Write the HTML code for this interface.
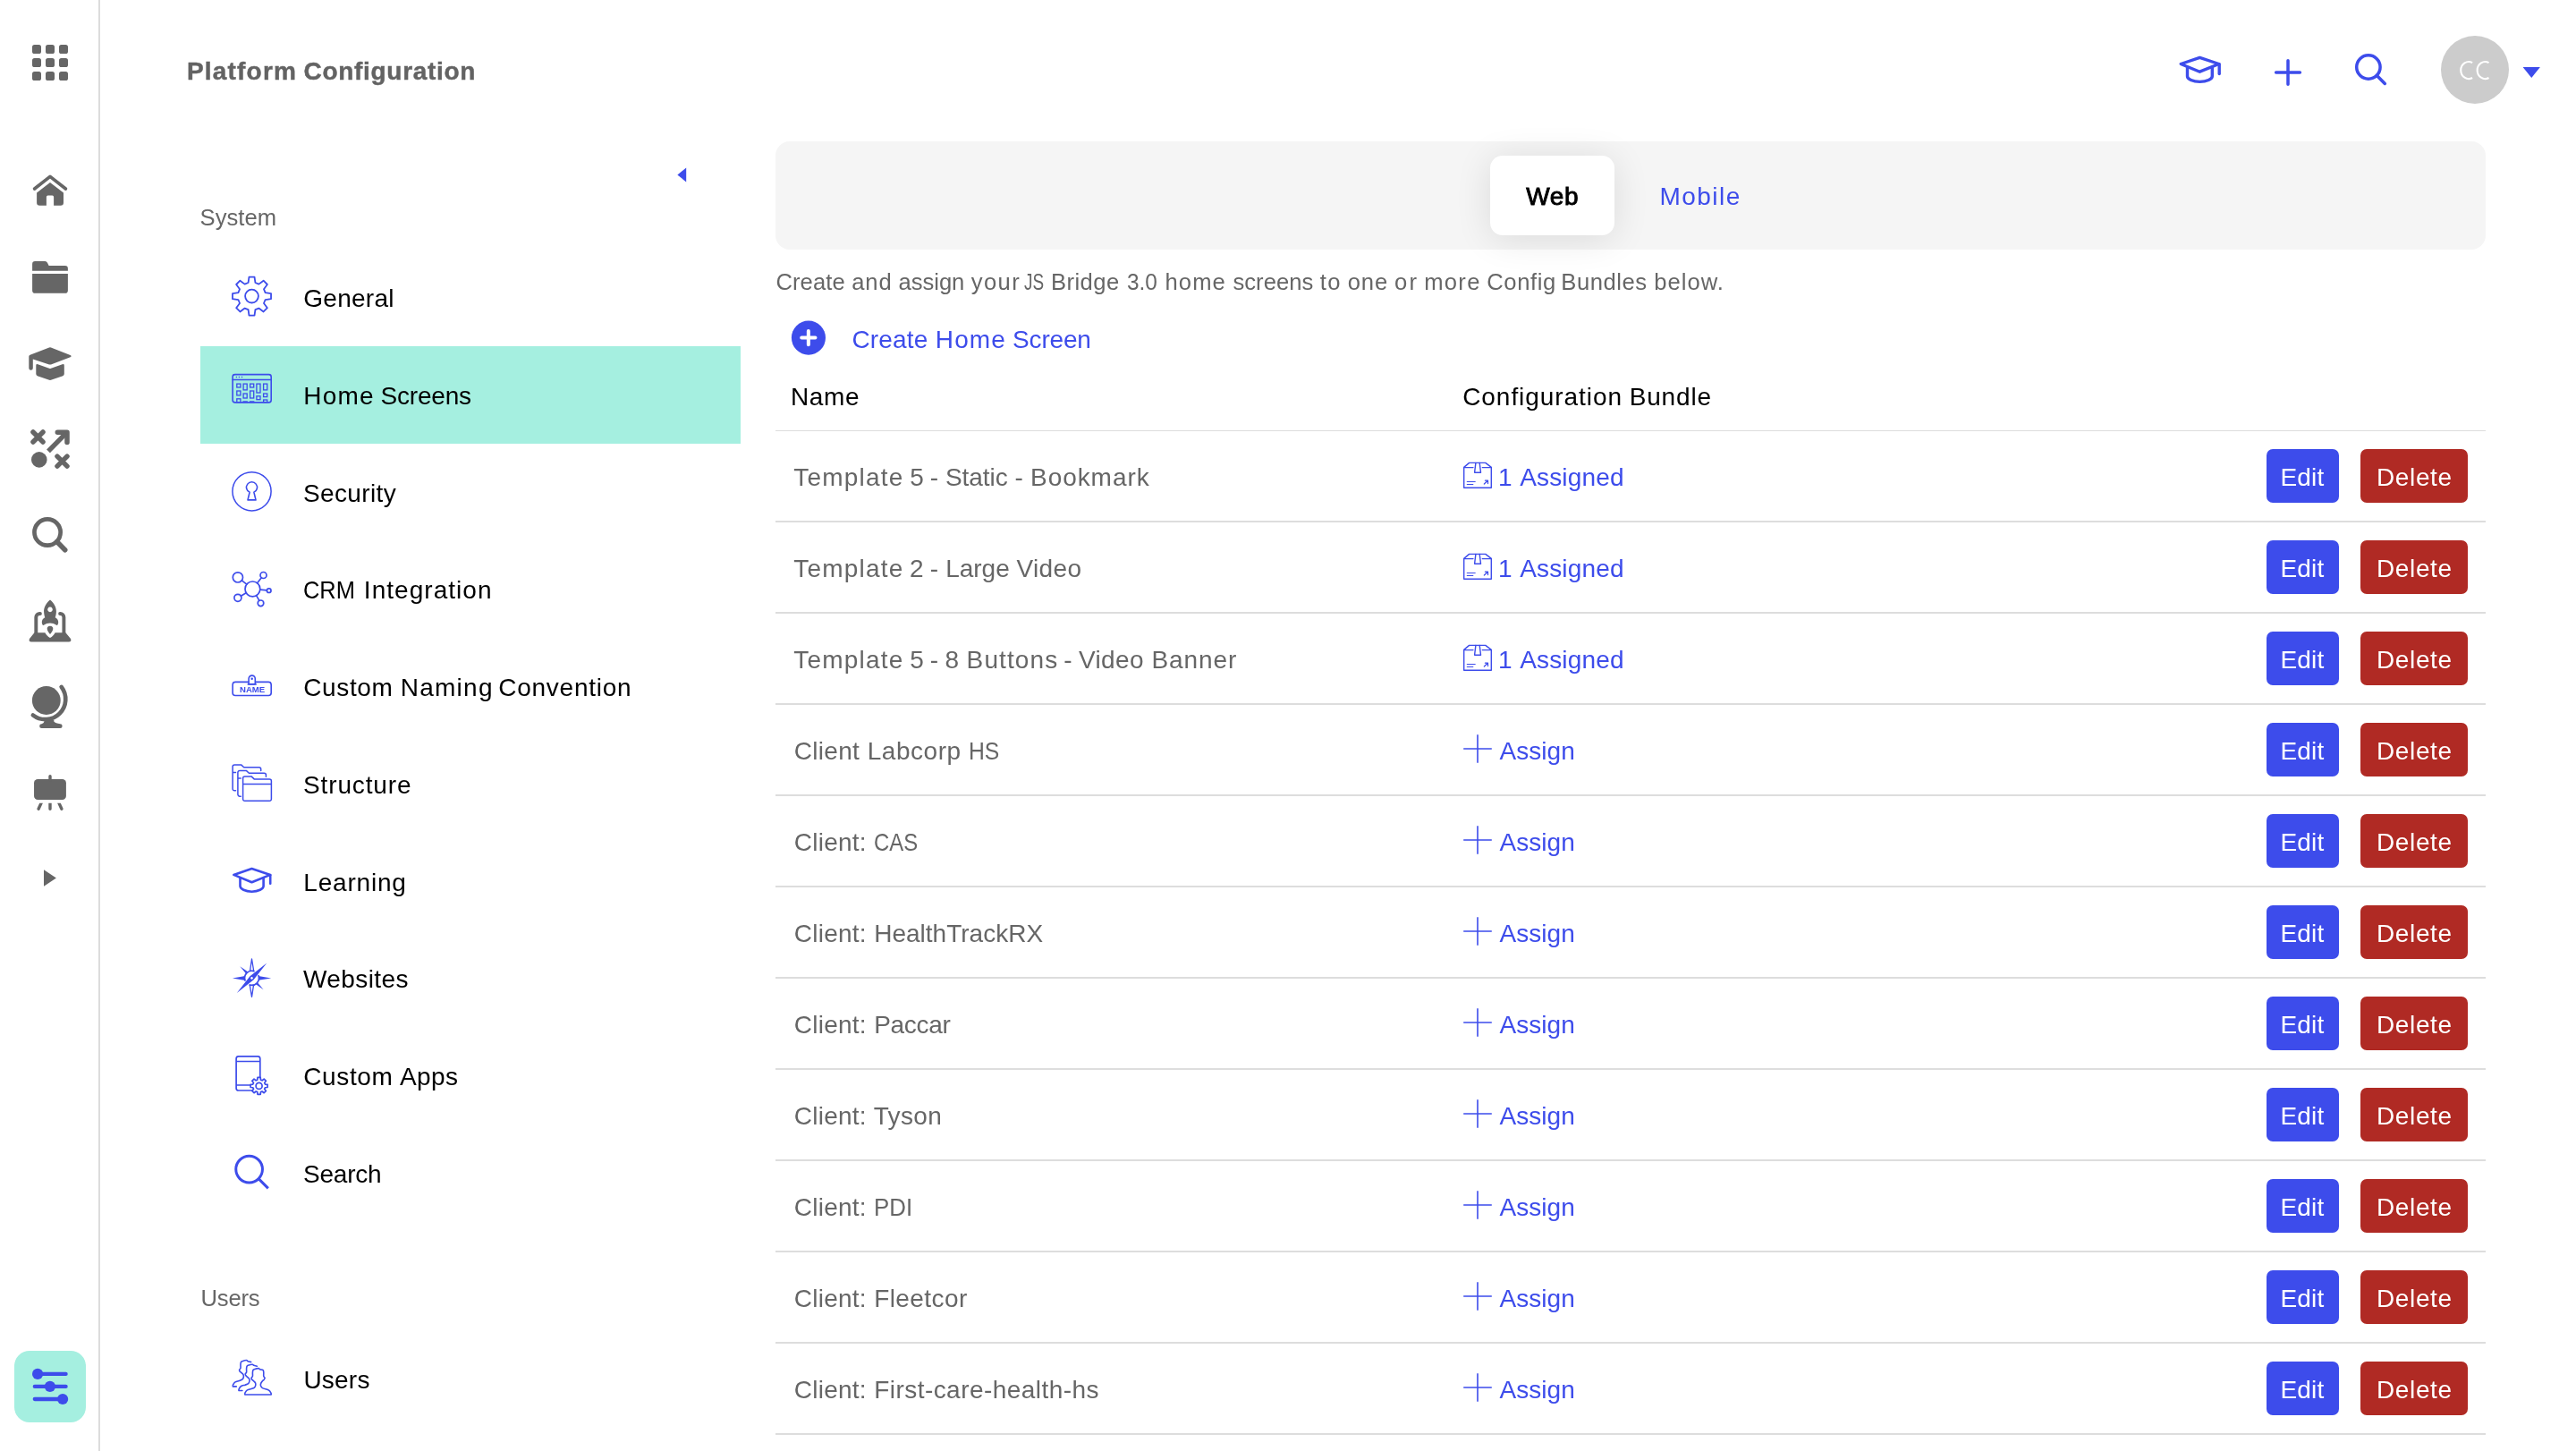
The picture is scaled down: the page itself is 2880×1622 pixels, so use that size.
<!DOCTYPE html>
<html><head><meta charset="utf-8"><title>Platform Configuration</title>
<style>
html,body{margin:0;padding:0;background:#fff}
body{width:2880px;height:1622px;position:relative;overflow:hidden;font-family:"Liberation Sans",sans-serif}
.t{position:absolute;white-space:nowrap;line-height:1;font-family:"Liberation Sans",sans-serif}
svg{position:absolute;left:0;top:0}
</style></head><body><div id="root" style="position:absolute;left:0;top:0;width:2880px;height:1622px;will-change:transform">
<div style="position:absolute;left:110px;top:0;width:2px;height:1622px;background:#dcdcdc"></div>
<div style="position:absolute;left:16px;top:1510px;width:80px;height:80px;border-radius:17px;background:#a5efe0"></div>
<div style="position:absolute;left:224px;top:387px;width:604px;height:109px;background:#a5efe0"></div>
<div style="position:absolute;left:867px;top:158px;width:1912px;height:121px;border-radius:16px;background:#f5f5f5"></div>
<div style="position:absolute;left:1666px;top:174px;width:139px;height:89px;border-radius:14px;background:#fff;box-shadow:0 4px 40px rgba(0,0,0,0.11)"></div>
<div style="position:absolute;left:2729px;top:40px;width:76px;height:76px;border-radius:50%;background:#cccccc"></div>
<div style="position:absolute;left:867px;top:481px;width:1912px;height:1px;background:#dddddd"></div>
<div style="position:absolute;left:867px;top:582px;width:1912px;height:2px;background:#dddddd"></div>
<div style="position:absolute;left:2534px;top:502px;width:81px;height:60px;border-radius:7px;background:#3d4ceb"></div>
<div style="position:absolute;left:2639px;top:502px;width:120px;height:60px;border-radius:7px;background:#b02a24"></div>
<div style="position:absolute;left:867px;top:684px;width:1912px;height:2px;background:#dddddd"></div>
<div style="position:absolute;left:2534px;top:604px;width:81px;height:60px;border-radius:7px;background:#3d4ceb"></div>
<div style="position:absolute;left:2639px;top:604px;width:120px;height:60px;border-radius:7px;background:#b02a24"></div>
<div style="position:absolute;left:867px;top:786px;width:1912px;height:2px;background:#dddddd"></div>
<div style="position:absolute;left:2534px;top:706px;width:81px;height:60px;border-radius:7px;background:#3d4ceb"></div>
<div style="position:absolute;left:2639px;top:706px;width:120px;height:60px;border-radius:7px;background:#b02a24"></div>
<div style="position:absolute;left:867px;top:888px;width:1912px;height:2px;background:#dddddd"></div>
<div style="position:absolute;left:2534px;top:808px;width:81px;height:60px;border-radius:7px;background:#3d4ceb"></div>
<div style="position:absolute;left:2639px;top:808px;width:120px;height:60px;border-radius:7px;background:#b02a24"></div>
<div style="position:absolute;left:867px;top:990px;width:1912px;height:2px;background:#dddddd"></div>
<div style="position:absolute;left:2534px;top:910px;width:81px;height:60px;border-radius:7px;background:#3d4ceb"></div>
<div style="position:absolute;left:2639px;top:910px;width:120px;height:60px;border-radius:7px;background:#b02a24"></div>
<div style="position:absolute;left:867px;top:1092px;width:1912px;height:2px;background:#dddddd"></div>
<div style="position:absolute;left:2534px;top:1012px;width:81px;height:60px;border-radius:7px;background:#3d4ceb"></div>
<div style="position:absolute;left:2639px;top:1012px;width:120px;height:60px;border-radius:7px;background:#b02a24"></div>
<div style="position:absolute;left:867px;top:1194px;width:1912px;height:2px;background:#dddddd"></div>
<div style="position:absolute;left:2534px;top:1114px;width:81px;height:60px;border-radius:7px;background:#3d4ceb"></div>
<div style="position:absolute;left:2639px;top:1114px;width:120px;height:60px;border-radius:7px;background:#b02a24"></div>
<div style="position:absolute;left:867px;top:1296px;width:1912px;height:2px;background:#dddddd"></div>
<div style="position:absolute;left:2534px;top:1216px;width:81px;height:60px;border-radius:7px;background:#3d4ceb"></div>
<div style="position:absolute;left:2639px;top:1216px;width:120px;height:60px;border-radius:7px;background:#b02a24"></div>
<div style="position:absolute;left:867px;top:1398px;width:1912px;height:2px;background:#dddddd"></div>
<div style="position:absolute;left:2534px;top:1318px;width:81px;height:60px;border-radius:7px;background:#3d4ceb"></div>
<div style="position:absolute;left:2639px;top:1318px;width:120px;height:60px;border-radius:7px;background:#b02a24"></div>
<div style="position:absolute;left:867px;top:1500px;width:1912px;height:2px;background:#dddddd"></div>
<div style="position:absolute;left:2534px;top:1420px;width:81px;height:60px;border-radius:7px;background:#3d4ceb"></div>
<div style="position:absolute;left:2639px;top:1420px;width:120px;height:60px;border-radius:7px;background:#b02a24"></div>
<div style="position:absolute;left:867px;top:1602px;width:1912px;height:2px;background:#dddddd"></div>
<div style="position:absolute;left:2534px;top:1522px;width:81px;height:60px;border-radius:7px;background:#3d4ceb"></div>
<div style="position:absolute;left:2639px;top:1522px;width:120px;height:60px;border-radius:7px;background:#b02a24"></div>
<svg width="2880" height="1622" viewBox="0 0 2880 1622"><g fill="#666666"><rect x="36" y="50" width="10" height="10" rx="2.6"/><rect x="51" y="50" width="10" height="10" rx="2.6"/><rect x="66" y="50" width="10" height="10" rx="2.6"/><rect x="36" y="65" width="10" height="10" rx="2.6"/><rect x="51" y="65" width="10" height="10" rx="2.6"/><rect x="66" y="65" width="10" height="10" rx="2.6"/><rect x="36" y="80" width="10" height="10" rx="2.6"/><rect x="51" y="80" width="10" height="10" rx="2.6"/><rect x="66" y="80" width="10" height="10" rx="2.6"/><path d="M38.6 211 L56 197.4 L73.4 211" fill="none" stroke="#666" stroke-width="3.7" stroke-linecap="round" stroke-linejoin="round"/><path d="M56 204.1 L71 215.6 V226.6 a3.2 3.2 0 0 1 -3.2 3.2 H60.1 V220.2 a1.6 1.6 0 0 0 -1.6 -1.6 h-5 a1.6 1.6 0 0 0 -1.6 1.6 V229.8 H44.3 a3.2 3.2 0 0 1 -3.2 -3.2 V215.6 Z"/><path d="M36.1 302.8 V295.2 a3.1 3.1 0 0 1 3.1 -3.1 H50.3 a3 3 0 0 1 2.7 1.7 L54.6 297.1 H72.8 a3.1 3.1 0 0 1 3.1 3.1 V302.8 Z"/><path d="M36.1 306.1 H75.9 V324.7 a3.1 3.1 0 0 1 -3.1 3.1 H39.2 a3.1 3.1 0 0 1 -3.1 -3.1 Z"/><path d="M55 388.4 Q56 388 57 388.4 L78.6 396.9 Q80.6 398.1 78.6 399.3 L57 407.4 Q56 407.8 55 407.4 L36.8 401.6 V411.4 a2.25 2.25 0 0 1 -4.5 0 V398.6 Q32.3 397.2 33.6 396.7 Z"/><path d="M40.3 408.6 Q40.3 406.6 42.3 407.3 L55 411.7 Q56 412.1 57 411.7 L69.7 407.3 Q71.8 406.6 71.8 408.6 V418 Q71.8 419.6 70.3 420.2 L57 424.8 Q56 425.1 55 424.8 L41.8 420.2 Q40.3 419.6 40.3 418 Z"/><path d="M37 483 L48 494 M48 483 L37 494 M64 510.1 L75 521.1 M75 510.1 L64 521.1" fill="none" stroke="#666" stroke-width="5.5" stroke-linecap="round" stroke-linejoin="round"/><circle cx="43.8" cy="513.9" r="8.8"/><path d="M64.3 483.2 H75 V494.4" fill="none" stroke="#666" stroke-width="5.5" stroke-linecap="round" stroke-linejoin="round"/><path d="M54 504.3 L74 484.2" fill="none" stroke="#666" stroke-width="5.4"/><circle cx="53.05" cy="595.05" r="14.6" fill="none" stroke="#666" stroke-width="4.7"/><path d="M63.6 605.6 L72.7 614.7" fill="none" stroke="#666" stroke-width="5.6" stroke-linecap="round"/><path d="M56 670.4 C61 674.5 63.2 679.5 62.9 684 C62.8 686.5 62.3 688.5 61.7 690.3 C64 691.3 65.4 693.3 65.2 696.2 L64.6 698.2 Q63.8 699.4 62.6 698.6 C61 697.2 58.6 696.4 56 696.4 C53.4 696.4 51 697.2 49.4 698.6 Q48.2 699.4 47.4 698.2 L46.8 696.2 C46.6 693.3 48 691.3 50.3 690.3 C49.7 688.5 49.2 686.5 49.1 684 C48.8 679.5 51 674.5 56 670.4 Z M56 678.6 a2.8 2.8 0 1 0 0.01 0 Z" fill-rule="evenodd"/><path d="M56 699.7 C58.3 699.7 59.5 701.3 59.3 703 C59.1 705 57.6 707.2 56 708.9 C54.4 707.2 52.9 705 52.7 703 C52.5 701.3 53.7 699.7 56 699.7 Z"/><path d="M44.9 686 H44.3 a4 4 0 0 0 -4 4 V707.4 M67.1 686 H67.4 a4 4 0 0 1 4 4 V707.4" fill="none" stroke="#666" stroke-width="3.9" stroke-linecap="round"/><path d="M38.4 707.2 H50.4 C51.6 709.6 53.6 711.8 56 713 C58.4 711.8 60.4 709.6 61.6 707.2 H73.4 L79 714 Q80.4 717.4 77 717.4 H35 Q31.6 717.4 33 714 Z"/><circle cx="51.8" cy="783" r="15.9"/><path d="M68.68 767.91 A22.6 22.6 0 0 1 36.9 799.5" fill="none" stroke="#666" stroke-width="4.7" stroke-linecap="round"/><path d="M49.4 804.6 H60.3 V806.6 Q62 808.6 67.3 809.3 a2.35 2.35 0 0 1 0 4.7 H46.5 a2.35 2.35 0 0 1 0 -4.7 Q49 808.6 49.4 806.8 Z"/><rect x="38.05" y="871.1" width="35.85" height="23" rx="4.2"/><path d="M56 867.8 V872" fill="none" stroke="#666" stroke-width="3.4" stroke-linecap="round"/><path d="M54.3 897.8 H57.7 V904.2 a1.7 1.7 0 0 1 -3.4 0 Z"/><path d="M44.2 897.8 H47.9 L44.6 904.9 a1.7 1.7 0 0 1 -3.1 -1.4 Z M67.8 897.8 H64.1 L67.4 904.9 a1.7 1.7 0 0 0 3.1 -1.4 Z"/><path d="M49 972.3 V990.8 L62.9 981.5 Z"/></g><path d="M42 1535.9 H73.6 M38.8 1549.9 H73.6 M38.8 1564 H70" fill="none" stroke="#3d4ceb" stroke-width="4.3" stroke-linecap="round"/><g fill="#3d4ceb"><circle cx="42.1" cy="1535.9" r="6.1"/><circle cx="55.9" cy="1549.9" r="6.1"/><circle cx="70.1" cy="1564" r="6.1"/></g><path d="M2438.2 71.5 L2459.35 64.4 L2480.8 71.5 L2459.35 80.2 Z" fill="none" stroke="#3d4ceb" stroke-width="3.4" stroke-linecap="round" stroke-linejoin="round"/><path d="M2481.2 71.8 V82.6" fill="none" stroke="#3d4ceb" stroke-width="3.4" stroke-linecap="round" stroke-linejoin="round"/><path d="M2445.5 75.6 V85.2 C2445.5 88.3 2451.5 91.4 2459.35 91.4 S2473.3 88.3 2473.3 85.2 V75.6" fill="none" stroke="#3d4ceb" stroke-width="3.4" stroke-linecap="round" stroke-linejoin="round"/><path d="M2544.6 81 H2571.4 M2558 67.7 V94.3" fill="none" stroke="#3d4ceb" stroke-width="3.5" stroke-linecap="round"/><circle cx="2647.9" cy="75" r="13.2" fill="none" stroke="#3d4ceb" stroke-width="3.5"/><path d="M2657.4 84.5 L2666.3 93.4" fill="none" stroke="#3d4ceb" stroke-width="3.6" stroke-linecap="round"/><path d="M2820.6 75 H2839.9 L2830.25 86.9 Z" fill="#3d4ceb"/><path d="M2764.13 70.2 A8.8 9.5 0 1 0 2764.13 87" fill="none" stroke="#fff" stroke-width="2.1"/><path d="M2782.53 70.2 A8.8 9.5 0 1 0 2782.53 87" fill="none" stroke="#fff" stroke-width="2.1"/><path d="M767.2 187.5 V203.4 L757.4 195.45 Z" fill="#3d4ceb"/><path d="M277.57 316.00 L278.47 309.56 L284.53 309.56 L285.43 316.00 L289.39 317.64 L294.59 313.73 L298.87 318.01 L294.96 323.21 L296.60 327.17 L303.04 328.07 L303.04 334.13 L296.60 335.03 L294.96 338.99 L298.87 344.19 L294.59 348.47 L289.39 344.56 L285.43 346.20 L284.53 352.64 L278.47 352.64 L277.57 346.20 L273.61 344.56 L268.41 348.47 L264.13 344.19 L268.04 338.99 L266.40 335.03 L259.96 334.13 L259.96 328.07 L266.40 327.17 L268.04 323.21 L264.13 318.01 L268.41 313.73 L273.61 317.64Z" fill="none" stroke="#3d4ceb" stroke-width="1.8" stroke-linejoin="round" stroke-linecap="round"/><circle cx="281.5" cy="331.1" r="7.4" fill="none" stroke="#3d4ceb" stroke-width="1.8" stroke-linejoin="round" stroke-linecap="round"/><rect x="260.1" y="418.6" width="43.1" height="31.3" rx="2.6" fill="none" stroke="#3d4ceb" stroke-width="1.6" stroke-linejoin="round" stroke-linecap="round"/><path d="M260.1 424.5 H303.2" fill="none" stroke="#3d4ceb" stroke-width="1.6" stroke-linejoin="round" stroke-linecap="round"/><circle cx="264.4" cy="421.4" r="0.75" fill="#3d4ceb"/><circle cx="267.4" cy="421.4" r="0.75" fill="#3d4ceb"/><circle cx="270.5" cy="421.4" r="0.75" fill="#3d4ceb"/><rect x="264.8" y="429.1" width="4.1" height="3.9" fill="none" stroke="#3d4ceb" stroke-width="1.3"/><rect x="264.8" y="437.0" width="4.1" height="4.9" fill="none" stroke="#3d4ceb" stroke-width="1.3"/><rect x="264.8" y="445.8" width="4.1" height="3.8" fill="none" stroke="#3d4ceb" stroke-width="1.3"/><rect x="272.1" y="429.1" width="4.1" height="6.8" fill="none" stroke="#3d4ceb" stroke-width="1.3"/><rect x="272.1" y="440.0" width="4.1" height="5.0" fill="none" stroke="#3d4ceb" stroke-width="1.3"/><rect x="272.1" y="448.9" width="4.1" height="0.7" fill="none" stroke="#3d4ceb" stroke-width="1.3"/><rect x="279.6" y="429.1" width="4.1" height="3.9" fill="none" stroke="#3d4ceb" stroke-width="1.3"/><rect x="279.6" y="437.0" width="4.1" height="8.0" fill="none" stroke="#3d4ceb" stroke-width="1.3"/><rect x="279.6" y="448.9" width="4.1" height="0.7" fill="none" stroke="#3d4ceb" stroke-width="1.3"/><rect x="286.9" y="429.1" width="4.1" height="9.9" fill="none" stroke="#3d4ceb" stroke-width="1.3"/><rect x="286.9" y="442.8" width="4.1" height="3.9" fill="none" stroke="#3d4ceb" stroke-width="1.3"/><rect x="294.6" y="429.1" width="4.1" height="6.8" fill="none" stroke="#3d4ceb" stroke-width="1.3"/><rect x="294.6" y="440.0" width="4.1" height="3.6" fill="none" stroke="#3d4ceb" stroke-width="1.3"/><rect x="294.6" y="447.0" width="4.1" height="2.6" fill="none" stroke="#3d4ceb" stroke-width="1.3"/><circle cx="281.5" cy="549.3" r="21.6" fill="none" stroke="#3d4ceb" stroke-width="1.5" stroke-linejoin="round" stroke-linecap="round"/><path d="M279.1 550.3 A6 6 0 1 1 283.9 550.3 L286.0 558.9 H277.0 Z" fill="none" stroke="#3d4ceb" stroke-width="1.6" stroke-linejoin="round" stroke-linecap="round"/><circle cx="282.4" cy="658.4" r="8.4" fill="none" stroke="#3d4ceb" stroke-width="1.7" stroke-linejoin="round" stroke-linecap="round"/><circle cx="265.9" cy="645.4" r="5.6" fill="none" stroke="#3d4ceb" stroke-width="1.7" stroke-linejoin="round" stroke-linecap="round"/><path d="M275.80 653.20 L270.30 648.87" fill="none" stroke="#3d4ceb" stroke-width="1.7" stroke-linejoin="round" stroke-linecap="round"/><circle cx="294.5" cy="643.0" r="3.5" fill="none" stroke="#3d4ceb" stroke-width="1.7" stroke-linejoin="round" stroke-linecap="round"/><path d="M287.59 651.79 L292.34 645.75" fill="none" stroke="#3d4ceb" stroke-width="1.7" stroke-linejoin="round" stroke-linecap="round"/><circle cx="300.7" cy="660.2" r="2.3" fill="none" stroke="#3d4ceb" stroke-width="1.7" stroke-linejoin="round" stroke-linecap="round"/><path d="M290.76 659.22 L298.41 659.97" fill="none" stroke="#3d4ceb" stroke-width="1.7" stroke-linejoin="round" stroke-linecap="round"/><circle cx="291.5" cy="674.3" r="3.3" fill="none" stroke="#3d4ceb" stroke-width="1.7" stroke-linejoin="round" stroke-linecap="round"/><path d="M286.57 665.69 L289.86 671.44" fill="none" stroke="#3d4ceb" stroke-width="1.7" stroke-linejoin="round" stroke-linecap="round"/><circle cx="265.9" cy="668.3" r="4.0" fill="none" stroke="#3d4ceb" stroke-width="1.7" stroke-linejoin="round" stroke-linecap="round"/><path d="M275.20 662.72 L269.33 666.24" fill="none" stroke="#3d4ceb" stroke-width="1.7" stroke-linejoin="round" stroke-linecap="round"/><rect x="260.1" y="762.4" width="43.1" height="15.1" rx="3" fill="none" stroke="#3d4ceb" stroke-width="1.6" stroke-linejoin="round" stroke-linecap="round"/><path d="M278.1 764.7 V758.7 a3.6 3.6 0 0 1 7.2 0 V764.7 Z" fill="#fff" stroke="#3d4ceb" stroke-width="1.6" stroke-linejoin="round"/><path d="M277.5 764.9 H285.9" fill="none" stroke="#3d4ceb" stroke-width="1.9" stroke-linejoin="round" stroke-linecap="round"/><circle cx="281.7" cy="758.7" r="1.25" fill="#3d4ceb"/><text x="282.1" y="774" text-anchor="middle" font-family="Liberation Sans, sans-serif" font-weight="700" font-size="9.6" textLength="28.2" lengthAdjust="spacingAndGlyphs" fill="#3d4ceb">NAME</text><path d="M271.6 870 a2.1 2.1 0 0 1 2.1 -2.1 H281 L284.2 870.9 H301.3 a2.1 2.1 0 0 1 2.1 2.1 V893.2 a2.1 2.1 0 0 1 -2.1 2.1 H273.7 a2.1 2.1 0 0 1 -2.1 -2.1 Z M271.6 876.5 H303.4" fill="none" stroke="#3d4ceb" stroke-width="1.5" stroke-linejoin="round" stroke-linecap="round"/><path d="M297.4 868.2 V866.3 a2.1 2.1 0 0 0 -2.1 -2.1 H278.4 L275.3 861.4 H268 a2.1 2.1 0 0 0 -2.1 2.1 V888.1 a2.1 2.1 0 0 0 2.1 2.1 H269.2 M265.9 870 H269.2" fill="none" stroke="#3d4ceb" stroke-width="1.5" stroke-linejoin="round" stroke-linecap="round"/><path d="M291.7 861.6 V859.9 a2.1 2.1 0 0 0 -2.1 -2.1 H272.7 L269.6 854.9 H262.2 a2.1 2.1 0 0 0 -2.1 2.1 V881.7 a2.1 2.1 0 0 0 2.1 2.1 H263.5 M260.1 863.5 H263.5" fill="none" stroke="#3d4ceb" stroke-width="1.5" stroke-linejoin="round" stroke-linecap="round"/><path d="M261.3 977.9 L281.5 971.1 L302.2 977.9 L281.5 986.3 Z" fill="none" stroke="#3d4ceb" stroke-width="2.6" stroke-linejoin="round" stroke-linecap="round"/><path d="M302.2 978.2 V987.8" fill="none" stroke="#3d4ceb" stroke-width="2.6" stroke-linejoin="round" stroke-linecap="round"/><path d="M268.5 982 V990.4 C268.5 993.6 274.3 996.7 281.5 996.7 S294.6 993.6 294.6 990.4 V982" fill="none" stroke="#3d4ceb" stroke-width="2.6" stroke-linejoin="round" stroke-linecap="round"/><path d="M298.3 1076.4 L283.55 1095.35 L264.8 1110 L279.45 1091.25 Z M281.5 1091.95 a1.35 1.35 0 1 0 0.01 0 Z" fill="#3d4ceb" fill-rule="evenodd"/><path d="M259.9 1093.4 L274.2 1091.1 L274.2 1096 Z M303.2 1093.4 L288.8 1090.9 L288.8 1095.8 Z" fill="#3d4ceb"/><path d="M268.3 1080.2 L277.0 1086.3 L274.9 1088.2 Z M294.6 1106.2 L286.0 1100.3 L288.1 1098.4 Z" fill="#3d4ceb"/><path d="M279.5 1085.3 L281.5 1072 L283.7 1085.3 Z M279.3 1101.3 L281.5 1114.4 L283.5 1101.3 Z" fill="none" stroke="#3d4ceb" stroke-width="1.3" stroke-linejoin="round" stroke-linecap="round"/><path d="M273.98 1096.04 A8 8 0 0 1 283.84 1085.65 M289.02 1090.56 A8 8 0 0 1 279.16 1100.95" fill="none" stroke="#3d4ceb" stroke-width="1.7" stroke-linejoin="round" stroke-linecap="round"/><path d="M290.8 1204.2 V1183.4 a2.6 2.6 0 0 0 -2.6 -2.6 H266.7 a2.6 2.6 0 0 0 -2.6 2.6 V1216.4 a2.6 2.6 0 0 0 2.6 2.6 H281.6 M264.1 1186.5 H290.8 M264.1 1213 H279.6" fill="none" stroke="#3d4ceb" stroke-width="1.7" stroke-linejoin="round" stroke-linecap="round"/><path d="M287.73 1207.15 L288.02 1204.43 L291.18 1204.43 L291.47 1207.15 L293.05 1207.81 L295.17 1206.08 L297.42 1208.33 L295.69 1210.45 L296.35 1212.03 L299.07 1212.32 L299.07 1215.48 L296.35 1215.77 L295.69 1217.35 L297.42 1219.47 L295.17 1221.72 L293.05 1219.99 L291.47 1220.65 L291.18 1223.37 L288.02 1223.37 L287.73 1220.65 L286.15 1219.99 L284.03 1221.72 L281.78 1219.47 L283.51 1217.35 L282.85 1215.77 L280.13 1215.48 L280.13 1212.32 L282.85 1212.03 L283.51 1210.45 L281.78 1208.33 L284.03 1206.08 L286.15 1207.81Z" fill="#fff" stroke="#3d4ceb" stroke-width="1.7" stroke-linejoin="round"/><circle cx="289.6" cy="1213.9" r="3.5" fill="none" stroke="#3d4ceb" stroke-width="1.7" stroke-linejoin="round" stroke-linecap="round"/><circle cx="278.6" cy="1307.1" r="14.85" fill="none" stroke="#3d4ceb" stroke-width="3.0" stroke-linejoin="round" stroke-linecap="round"/><path d="M289.3 1317.9 L299.8 1328.4" fill="none" stroke="#3d4ceb" stroke-width="3.0"/><path d="M273.82 1558.95 C273.86 1558.62 273.60 1557.81 274.04 1556.96 C274.48 1556.12 275.33 1554.61 276.47 1553.88 C277.61 1553.14 279.55 1553.03 280.88 1552.55 C282.20 1552.07 283.60 1551.67 284.41 1551.01 C285.22 1550.35 285.55 1549.43 285.73 1548.58 C285.91 1547.74 285.88 1546.74 285.51 1545.94 C285.14 1545.13 284.19 1544.39 283.52 1543.73 C282.86 1543.07 281.94 1542.55 281.54 1541.97 C281.14 1541.38 280.95 1540.79 281.10 1540.20 C281.25 1539.61 282.20 1539.39 282.42 1538.44 C282.64 1537.48 282.35 1535.57 282.42 1534.47 C282.50 1533.36 282.57 1532.44 282.86 1531.82 C283.16 1531.20 283.16 1531.08 284.19 1530.72 C285.22 1530.35 287.97 1529.61 289.04 1529.61 C290.10 1529.61 289.74 1530.39 290.58 1530.72 C291.43 1531.05 293.41 1530.97 294.11 1531.60 C294.81 1532.22 294.66 1533.33 294.77 1534.47 C294.88 1535.61 294.55 1537.44 294.77 1538.44 C294.99 1539.43 296.06 1539.76 296.10 1540.42 C296.13 1541.08 295.43 1541.86 294.99 1542.41 C294.55 1542.96 294.00 1543.07 293.45 1543.73 C292.90 1544.39 292.02 1545.49 291.69 1546.38 C291.35 1547.26 291.17 1548.14 291.46 1549.02 C291.76 1549.91 292.05 1550.90 293.45 1551.67 C294.85 1552.44 298.41 1552.99 299.85 1553.66 C301.28 1554.32 301.50 1554.94 302.05 1555.64 C302.60 1556.34 302.97 1557.29 303.15 1557.85 C303.34 1558.40 303.15 1558.76 303.15 1558.95 Z" fill="none" stroke="#3d4ceb" stroke-width="1.6" stroke-linejoin="round" stroke-linecap="round"/><path d="M287.27 1527.19 C286.69 1527.04 284.59 1526.64 283.75 1526.31 C282.90 1525.98 283.27 1525.20 282.20 1525.20 C281.14 1525.20 278.38 1525.94 277.35 1526.31 C276.32 1526.67 276.32 1526.78 276.03 1527.41 C275.73 1528.03 275.66 1528.95 275.58 1530.06 C275.51 1531.16 275.81 1533.07 275.58 1534.03 C275.36 1534.98 274.41 1535.20 274.26 1535.79 C274.11 1536.38 274.30 1536.97 274.70 1537.55 C275.11 1538.14 276.03 1538.66 276.69 1539.32 C277.35 1539.98 278.30 1540.72 278.67 1541.52 C279.04 1542.33 279.08 1543.33 278.89 1544.17 C278.71 1545.02 278.38 1545.94 277.57 1546.60 C276.76 1547.26 275.36 1547.66 274.04 1548.14 C272.72 1548.62 270.77 1548.73 269.63 1549.46 C268.49 1550.20 267.64 1551.71 267.20 1552.55 C266.76 1553.40 267.02 1554.21 266.98 1554.54 H270.88" fill="none" stroke="#3d4ceb" stroke-width="1.6" stroke-linejoin="round" stroke-linecap="round"/><path d="M280.66 1522.56 C280.07 1522.41 277.97 1522.01 277.13 1521.67 C276.28 1521.34 276.65 1520.57 275.58 1520.57 C274.52 1520.57 271.76 1521.31 270.73 1521.67 C269.70 1522.04 269.70 1522.15 269.41 1522.78 C269.11 1523.40 269.04 1524.32 268.97 1525.42 C268.89 1526.53 269.19 1528.44 268.97 1529.39 C268.75 1530.35 267.79 1530.57 267.64 1531.16 C267.50 1531.75 267.68 1532.33 268.09 1532.92 C268.49 1533.51 269.41 1534.03 270.07 1534.69 C270.73 1535.35 271.69 1536.08 272.06 1536.89 C272.42 1537.70 272.46 1538.69 272.28 1539.54 C272.09 1540.38 271.76 1541.30 270.95 1541.97 C270.14 1542.63 268.75 1543.03 267.42 1543.51 C266.10 1543.99 264.15 1544.10 263.01 1544.83 C261.87 1545.57 261.03 1547.08 260.59 1547.92 C260.15 1548.77 260.40 1549.57 260.37 1549.91 H264.27" fill="none" stroke="#3d4ceb" stroke-width="1.6" stroke-linejoin="round" stroke-linecap="round"/><circle cx="903.95" cy="377.6" r="19.05" fill="#3d4ceb"/><path d="M896.2 377.55 H911.5 M903.85 369.9 V385.2" fill="none" stroke="#fff" stroke-width="4" stroke-linecap="round"/><g transform="translate(0 0)"><path d="M1636.7 522.4 V545.3 H1667.3 V522.4 M1636.7 522.4 L1642.6 517.4 H1660.8 L1667.3 522.4 M1636.7 522.6 H1647 M1657.3 522.6 H1667.3" fill="none" stroke="#3d4ceb" stroke-width="1.4" stroke-linejoin="round" stroke-linecap="round"/><path d="M1649.9 517.4 L1648.6 528.2 H1655.5 L1654.2 517.4" fill="none" stroke="#3d4ceb" stroke-width="1.4" stroke-linejoin="round" stroke-linecap="round"/><path d="M1640.3 538.5 H1649.2 M1640.3 541.5 H1646.8 M1659.3 541 L1663.4 537.3 M1660.4 537.2 H1663.5 V540.6" fill="none" stroke="#3d4ceb" stroke-width="1.2" stroke-linejoin="round" stroke-linecap="round"/></g><g transform="translate(0 102)"><path d="M1636.7 522.4 V545.3 H1667.3 V522.4 M1636.7 522.4 L1642.6 517.4 H1660.8 L1667.3 522.4 M1636.7 522.6 H1647 M1657.3 522.6 H1667.3" fill="none" stroke="#3d4ceb" stroke-width="1.4" stroke-linejoin="round" stroke-linecap="round"/><path d="M1649.9 517.4 L1648.6 528.2 H1655.5 L1654.2 517.4" fill="none" stroke="#3d4ceb" stroke-width="1.4" stroke-linejoin="round" stroke-linecap="round"/><path d="M1640.3 538.5 H1649.2 M1640.3 541.5 H1646.8 M1659.3 541 L1663.4 537.3 M1660.4 537.2 H1663.5 V540.6" fill="none" stroke="#3d4ceb" stroke-width="1.2" stroke-linejoin="round" stroke-linecap="round"/></g><g transform="translate(0 204)"><path d="M1636.7 522.4 V545.3 H1667.3 V522.4 M1636.7 522.4 L1642.6 517.4 H1660.8 L1667.3 522.4 M1636.7 522.6 H1647 M1657.3 522.6 H1667.3" fill="none" stroke="#3d4ceb" stroke-width="1.4" stroke-linejoin="round" stroke-linecap="round"/><path d="M1649.9 517.4 L1648.6 528.2 H1655.5 L1654.2 517.4" fill="none" stroke="#3d4ceb" stroke-width="1.4" stroke-linejoin="round" stroke-linecap="round"/><path d="M1640.3 538.5 H1649.2 M1640.3 541.5 H1646.8 M1659.3 541 L1663.4 537.3 M1660.4 537.2 H1663.5 V540.6" fill="none" stroke="#3d4ceb" stroke-width="1.2" stroke-linejoin="round" stroke-linecap="round"/></g><path d="M1636.2 837 H1667.8 M1652 821.2 V852.8" fill="none" stroke="#3d4ceb" stroke-width="1.6"/><path d="M1636.2 939 H1667.8 M1652 923.2 V954.8" fill="none" stroke="#3d4ceb" stroke-width="1.6"/><path d="M1636.2 1041 H1667.8 M1652 1025.2 V1056.8" fill="none" stroke="#3d4ceb" stroke-width="1.6"/><path d="M1636.2 1143 H1667.8 M1652 1127.2 V1158.8" fill="none" stroke="#3d4ceb" stroke-width="1.6"/><path d="M1636.2 1245 H1667.8 M1652 1229.2 V1260.8" fill="none" stroke="#3d4ceb" stroke-width="1.6"/><path d="M1636.2 1347 H1667.8 M1652 1331.2 V1362.8" fill="none" stroke="#3d4ceb" stroke-width="1.6"/><path d="M1636.2 1449 H1667.8 M1652 1433.2 V1464.8" fill="none" stroke="#3d4ceb" stroke-width="1.6"/><path d="M1636.2 1551 H1667.8 M1652 1535.2 V1566.8" fill="none" stroke="#3d4ceb" stroke-width="1.6"/></svg>
<div class="t" style="left:209.00px;top:66px;font-size:28px;color:#636363;font-weight:700;letter-spacing:1.189px;-webkit-text-stroke:0.45px #636363;">Platform</div>
<div class="t" style="left:339.60px;top:66px;font-size:28px;color:#636363;font-weight:700;letter-spacing:0.690px;-webkit-text-stroke:0.45px #636363;">Configuration</div>
<div class="t" style="left:223.60px;top:231px;font-size:25.6px;color:#666666;font-weight:400;letter-spacing:0.013px;">System</div>
<div class="t" style="left:224.60px;top:1439px;font-size:25.6px;color:#666666;font-weight:400;letter-spacing:-0.209px;">Users</div>
<div class="t" style="left:339.31px;top:320px;font-size:28px;color:#000;font-weight:400;letter-spacing:0.261px;">General</div>
<div class="t" style="left:339.35px;top:429px;font-size:28px;color:#000;font-weight:400;letter-spacing:1.140px;">Home</div>
<div class="t" style="left:425.62px;top:429px;font-size:28px;color:#000;font-weight:400;letter-spacing:-0.223px;">Screens</div>
<div class="t" style="left:339.02px;top:538px;font-size:28px;color:#000;font-weight:400;letter-spacing:0.358px;">Security</div>
<div class="t" style="left:339.40px;top:646px;font-size:28px;color:#000;font-weight:400;letter-spacing:0.000px;transform:scaleX(0.9081);transform-origin:0 0;">CRM</div>
<div class="t" style="left:406.87px;top:646px;font-size:28px;color:#000;font-weight:400;letter-spacing:1.033px;">Integration</div>
<div class="t" style="left:339.31px;top:755px;font-size:28px;color:#000;font-weight:400;letter-spacing:0.602px;">Custom</div>
<div class="t" style="left:447.67px;top:755px;font-size:28px;color:#000;font-weight:400;letter-spacing:1.280px;">Naming</div>
<div class="t" style="left:557.24px;top:755px;font-size:28px;color:#000;font-weight:400;letter-spacing:0.754px;">Convention</div>
<div class="t" style="left:339.02px;top:864px;font-size:28px;color:#000;font-weight:400;letter-spacing:0.865px;">Structure</div>
<div class="t" style="left:339.35px;top:973px;font-size:28px;color:#000;font-weight:400;letter-spacing:0.801px;">Learning</div>
<div class="t" style="left:338.97px;top:1081px;font-size:28px;color:#000;font-weight:400;letter-spacing:0.412px;">Websites</div>
<div class="t" style="left:339.31px;top:1190px;font-size:28px;color:#000;font-weight:400;letter-spacing:0.602px;">Custom</div>
<div class="t" style="left:446.92px;top:1190px;font-size:28px;color:#000;font-weight:400;letter-spacing:0.429px;">Apps</div>
<div class="t" style="left:339.02px;top:1299px;font-size:28px;color:#000;font-weight:400;letter-spacing:-0.229px;">Search</div>
<div class="t" style="left:339.40px;top:1529px;font-size:28px;color:#000;font-weight:400;letter-spacing:0.221px;">Users</div>
<div class="t" style="left:1706.20px;top:206px;font-size:28px;color:#000;font-weight:400;letter-spacing:0.653px;-webkit-text-stroke:0.9px #000;">Web</div>
<div class="t" style="left:1855.40px;top:206px;font-size:28px;color:#3d4ceb;font-weight:400;letter-spacing:1.478px;">Mobile</div>
<div class="t" style="left:867.40px;top:303px;font-size:25.6px;color:#666666;font-weight:400;letter-spacing:0.089px;">Create</div>
<div class="t" style="left:952.19px;top:303px;font-size:25.6px;color:#666666;font-weight:400;letter-spacing:0.880px;">and</div>
<div class="t" style="left:1004.44px;top:303px;font-size:25.6px;color:#666666;font-weight:400;letter-spacing:-0.018px;">assign</div>
<div class="t" style="left:1085.75px;top:303px;font-size:25.6px;color:#666666;font-weight:400;letter-spacing:1.397px;">your</div>
<div class="t" style="left:1145.22px;top:303px;font-size:25.6px;color:#666666;font-weight:400;letter-spacing:0.000px;transform:scaleX(0.7399);transform-origin:0 0;">JS</div>
<div class="t" style="left:1174.88px;top:303px;font-size:25.6px;color:#666666;font-weight:400;letter-spacing:0.464px;">Bridge</div>
<div class="t" style="left:1259.71px;top:303px;font-size:25.6px;color:#666666;font-weight:400;letter-spacing:0.000px;transform:scaleX(0.9531);transform-origin:0 0;">3.0</div>
<div class="t" style="left:1302.44px;top:303px;font-size:25.6px;color:#666666;font-weight:400;letter-spacing:1.120px;">home</div>
<div class="t" style="left:1378.43px;top:303px;font-size:25.6px;color:#666666;font-weight:400;letter-spacing:0.031px;">screens</div>
<div class="t" style="left:1475.64px;top:303px;font-size:25.6px;color:#666666;font-weight:400;letter-spacing:1.546px;">to</div>
<div class="t" style="left:1506.82px;top:303px;font-size:25.6px;color:#666666;font-weight:400;letter-spacing:0.824px;">one</div>
<div class="t" style="left:1558.96px;top:303px;font-size:25.6px;color:#666666;font-weight:400;letter-spacing:2.222px;">or</div>
<div class="t" style="left:1592.26px;top:303px;font-size:25.6px;color:#666666;font-weight:400;letter-spacing:1.271px;">more</div>
<div class="t" style="left:1662.31px;top:303px;font-size:25.6px;color:#666666;font-weight:400;letter-spacing:0.576px;">Config</div>
<div class="t" style="left:1745.34px;top:303px;font-size:25.6px;color:#666666;font-weight:400;letter-spacing:0.549px;">Bundles</div>
<div class="t" style="left:1849.35px;top:303px;font-size:25.6px;color:#666666;font-weight:400;letter-spacing:0.979px;">below.</div>
<div class="t" style="left:952.40px;top:366px;font-size:28px;color:#3d4ceb;font-weight:400;letter-spacing:0.164px;">Create</div>
<div class="t" style="left:1045.76px;top:366px;font-size:28px;color:#3d4ceb;font-weight:400;letter-spacing:1.160px;">Home</div>
<div class="t" style="left:1132.10px;top:366px;font-size:28px;color:#3d4ceb;font-weight:400;letter-spacing:-0.188px;">Screen</div>
<div class="t" style="left:884.00px;top:430px;font-size:28px;color:#000;font-weight:400;letter-spacing:0.628px;">Name</div>
<div class="t" style="left:1635.20px;top:430px;font-size:28px;color:#000;font-weight:400;letter-spacing:0.942px;">Configuration</div>
<div class="t" style="left:1821.70px;top:430px;font-size:28px;color:#000;font-weight:400;letter-spacing:0.837px;">Bundle</div>
<div class="t" style="left:887.35px;top:520px;font-size:28px;color:#666666;font-weight:400;letter-spacing:1.189px;">Template</div>
<div class="t" style="left:1017.14px;top:520px;font-size:28px;color:#666666;font-weight:400;letter-spacing:0.000px;">5</div>
<div class="t" style="left:1039.81px;top:520px;font-size:28px;color:#666666;font-weight:400;letter-spacing:0.000px;">-</div>
<div class="t" style="left:1057.01px;top:520px;font-size:28px;color:#666666;font-weight:400;letter-spacing:-0.065px;">Static</div>
<div class="t" style="left:1134.48px;top:520px;font-size:28px;color:#666666;font-weight:400;letter-spacing:0.000px;">-</div>
<div class="t" style="left:1152.02px;top:520px;font-size:28px;color:#666666;font-weight:400;letter-spacing:0.946px;">Bookmark</div>
<div class="t" style="left:1675.02px;top:520px;font-size:28px;color:#3d4ceb;font-weight:400;letter-spacing:0.000px;">1</div>
<div class="t" style="left:1699.24px;top:520px;font-size:28px;color:#3d4ceb;font-weight:400;letter-spacing:0.149px;">Assigned</div>
<div class="t" style="left:2549.50px;top:520px;font-size:28px;color:#fff;font-weight:400;letter-spacing:0.177px;">Edit</div>
<div class="t" style="left:2657.00px;top:520px;font-size:28px;color:#fff;font-weight:400;letter-spacing:0.627px;">Delete</div>
<div class="t" style="left:887.35px;top:622px;font-size:28px;color:#666666;font-weight:400;letter-spacing:1.189px;">Template</div>
<div class="t" style="left:1017.00px;top:622px;font-size:28px;color:#666666;font-weight:400;letter-spacing:0.000px;">2</div>
<div class="t" style="left:1039.81px;top:622px;font-size:28px;color:#666666;font-weight:400;letter-spacing:0.000px;">-</div>
<div class="t" style="left:1057.34px;top:622px;font-size:28px;color:#666666;font-weight:400;letter-spacing:-0.061px;">Large</div>
<div class="t" style="left:1136.45px;top:622px;font-size:28px;color:#666666;font-weight:400;letter-spacing:0.355px;">Video</div>
<div class="t" style="left:1675.02px;top:622px;font-size:28px;color:#3d4ceb;font-weight:400;letter-spacing:0.000px;">1</div>
<div class="t" style="left:1699.24px;top:622px;font-size:28px;color:#3d4ceb;font-weight:400;letter-spacing:0.149px;">Assigned</div>
<div class="t" style="left:2549.50px;top:622px;font-size:28px;color:#fff;font-weight:400;letter-spacing:0.177px;">Edit</div>
<div class="t" style="left:2657.00px;top:622px;font-size:28px;color:#fff;font-weight:400;letter-spacing:0.627px;">Delete</div>
<div class="t" style="left:887.35px;top:724px;font-size:28px;color:#666666;font-weight:400;letter-spacing:1.189px;">Template</div>
<div class="t" style="left:1017.14px;top:724px;font-size:28px;color:#666666;font-weight:400;letter-spacing:0.000px;">5</div>
<div class="t" style="left:1039.81px;top:724px;font-size:28px;color:#666666;font-weight:400;letter-spacing:0.000px;">-</div>
<div class="t" style="left:1056.60px;top:724px;font-size:28px;color:#666666;font-weight:400;letter-spacing:0.000px;">8</div>
<div class="t" style="left:1080.62px;top:724px;font-size:28px;color:#666666;font-weight:400;letter-spacing:1.095px;">Buttons</div>
<div class="t" style="left:1189.20px;top:724px;font-size:28px;color:#666666;font-weight:400;letter-spacing:0.000px;">-</div>
<div class="t" style="left:1205.98px;top:724px;font-size:28px;color:#666666;font-weight:400;letter-spacing:0.355px;">Video</div>
<div class="t" style="left:1287.53px;top:724px;font-size:28px;color:#666666;font-weight:400;letter-spacing:0.902px;">Banner</div>
<div class="t" style="left:1675.02px;top:724px;font-size:28px;color:#3d4ceb;font-weight:400;letter-spacing:0.000px;">1</div>
<div class="t" style="left:1699.24px;top:724px;font-size:28px;color:#3d4ceb;font-weight:400;letter-spacing:0.149px;">Assigned</div>
<div class="t" style="left:2549.50px;top:724px;font-size:28px;color:#fff;font-weight:400;letter-spacing:0.177px;">Edit</div>
<div class="t" style="left:2657.00px;top:724px;font-size:28px;color:#fff;font-weight:400;letter-spacing:0.627px;">Delete</div>
<div class="t" style="left:887.81px;top:826px;font-size:28px;color:#666666;font-weight:400;letter-spacing:0.301px;">Client</div>
<div class="t" style="left:969.73px;top:826px;font-size:28px;color:#666666;font-weight:400;letter-spacing:0.529px;">Labcorp</div>
<div class="t" style="left:1083.33px;top:826px;font-size:28px;color:#666666;font-weight:400;letter-spacing:0.000px;transform:scaleX(0.8825);transform-origin:0 0;">HS</div>
<div class="t" style="left:1676.50px;top:826px;font-size:28px;color:#3d4ceb;font-weight:400;letter-spacing:0.046px;">Assign</div>
<div class="t" style="left:2549.50px;top:826px;font-size:28px;color:#fff;font-weight:400;letter-spacing:0.177px;">Edit</div>
<div class="t" style="left:2657.00px;top:826px;font-size:28px;color:#fff;font-weight:400;letter-spacing:0.627px;">Delete</div>
<div class="t" style="left:887.81px;top:928px;font-size:28px;color:#666666;font-weight:400;letter-spacing:0.244px;">Client:</div>
<div class="t" style="left:977.29px;top:928px;font-size:28px;color:#666666;font-weight:400;letter-spacing:0.000px;transform:scaleX(0.8539);transform-origin:0 0;">CAS</div>
<div class="t" style="left:1676.50px;top:928px;font-size:28px;color:#3d4ceb;font-weight:400;letter-spacing:0.046px;">Assign</div>
<div class="t" style="left:2549.50px;top:928px;font-size:28px;color:#fff;font-weight:400;letter-spacing:0.177px;">Edit</div>
<div class="t" style="left:2657.00px;top:928px;font-size:28px;color:#fff;font-weight:400;letter-spacing:0.627px;">Delete</div>
<div class="t" style="left:887.81px;top:1030px;font-size:28px;color:#666666;font-weight:400;letter-spacing:0.244px;">Client:</div>
<div class="t" style="left:977.18px;top:1030px;font-size:28px;color:#666666;font-weight:400;letter-spacing:0.009px;">HealthTrackRX</div>
<div class="t" style="left:1676.50px;top:1030px;font-size:28px;color:#3d4ceb;font-weight:400;letter-spacing:0.046px;">Assign</div>
<div class="t" style="left:2549.50px;top:1030px;font-size:28px;color:#fff;font-weight:400;letter-spacing:0.177px;">Edit</div>
<div class="t" style="left:2657.00px;top:1030px;font-size:28px;color:#fff;font-weight:400;letter-spacing:0.627px;">Delete</div>
<div class="t" style="left:887.81px;top:1132px;font-size:28px;color:#666666;font-weight:400;letter-spacing:0.244px;">Client:</div>
<div class="t" style="left:977.18px;top:1132px;font-size:28px;color:#666666;font-weight:400;letter-spacing:-0.295px;">Paccar</div>
<div class="t" style="left:1676.50px;top:1132px;font-size:28px;color:#3d4ceb;font-weight:400;letter-spacing:0.046px;">Assign</div>
<div class="t" style="left:2549.50px;top:1132px;font-size:28px;color:#fff;font-weight:400;letter-spacing:0.177px;">Edit</div>
<div class="t" style="left:2657.00px;top:1132px;font-size:28px;color:#fff;font-weight:400;letter-spacing:0.627px;">Delete</div>
<div class="t" style="left:887.81px;top:1234px;font-size:28px;color:#666666;font-weight:400;letter-spacing:0.244px;">Client:</div>
<div class="t" style="left:976.68px;top:1234px;font-size:28px;color:#666666;font-weight:400;letter-spacing:0.376px;">Tyson</div>
<div class="t" style="left:1676.50px;top:1234px;font-size:28px;color:#3d4ceb;font-weight:400;letter-spacing:0.046px;">Assign</div>
<div class="t" style="left:2549.50px;top:1234px;font-size:28px;color:#fff;font-weight:400;letter-spacing:0.177px;">Edit</div>
<div class="t" style="left:2657.00px;top:1234px;font-size:28px;color:#fff;font-weight:400;letter-spacing:0.627px;">Delete</div>
<div class="t" style="left:887.81px;top:1336px;font-size:28px;color:#666666;font-weight:400;letter-spacing:0.244px;">Client:</div>
<div class="t" style="left:977.33px;top:1336px;font-size:28px;color:#666666;font-weight:400;letter-spacing:0.000px;transform:scaleX(0.9227);transform-origin:0 0;">PDI</div>
<div class="t" style="left:1676.50px;top:1336px;font-size:28px;color:#3d4ceb;font-weight:400;letter-spacing:0.046px;">Assign</div>
<div class="t" style="left:2549.50px;top:1336px;font-size:28px;color:#fff;font-weight:400;letter-spacing:0.177px;">Edit</div>
<div class="t" style="left:2657.00px;top:1336px;font-size:28px;color:#fff;font-weight:400;letter-spacing:0.627px;">Delete</div>
<div class="t" style="left:887.81px;top:1438px;font-size:28px;color:#666666;font-weight:400;letter-spacing:0.244px;">Client:</div>
<div class="t" style="left:977.18px;top:1438px;font-size:28px;color:#666666;font-weight:400;letter-spacing:0.420px;">Fleetcor</div>
<div class="t" style="left:1676.50px;top:1438px;font-size:28px;color:#3d4ceb;font-weight:400;letter-spacing:0.046px;">Assign</div>
<div class="t" style="left:2549.50px;top:1438px;font-size:28px;color:#fff;font-weight:400;letter-spacing:0.177px;">Edit</div>
<div class="t" style="left:2657.00px;top:1438px;font-size:28px;color:#fff;font-weight:400;letter-spacing:0.627px;">Delete</div>
<div class="t" style="left:887.81px;top:1540px;font-size:28px;color:#666666;font-weight:400;letter-spacing:0.244px;">Client:</div>
<div class="t" style="left:977.18px;top:1540px;font-size:28px;color:#666666;font-weight:400;letter-spacing:0.457px;">First-care-health-hs</div>
<div class="t" style="left:1676.50px;top:1540px;font-size:28px;color:#3d4ceb;font-weight:400;letter-spacing:0.046px;">Assign</div>
<div class="t" style="left:2549.50px;top:1540px;font-size:28px;color:#fff;font-weight:400;letter-spacing:0.177px;">Edit</div>
<div class="t" style="left:2657.00px;top:1540px;font-size:28px;color:#fff;font-weight:400;letter-spacing:0.627px;">Delete</div>
</div></body></html>
